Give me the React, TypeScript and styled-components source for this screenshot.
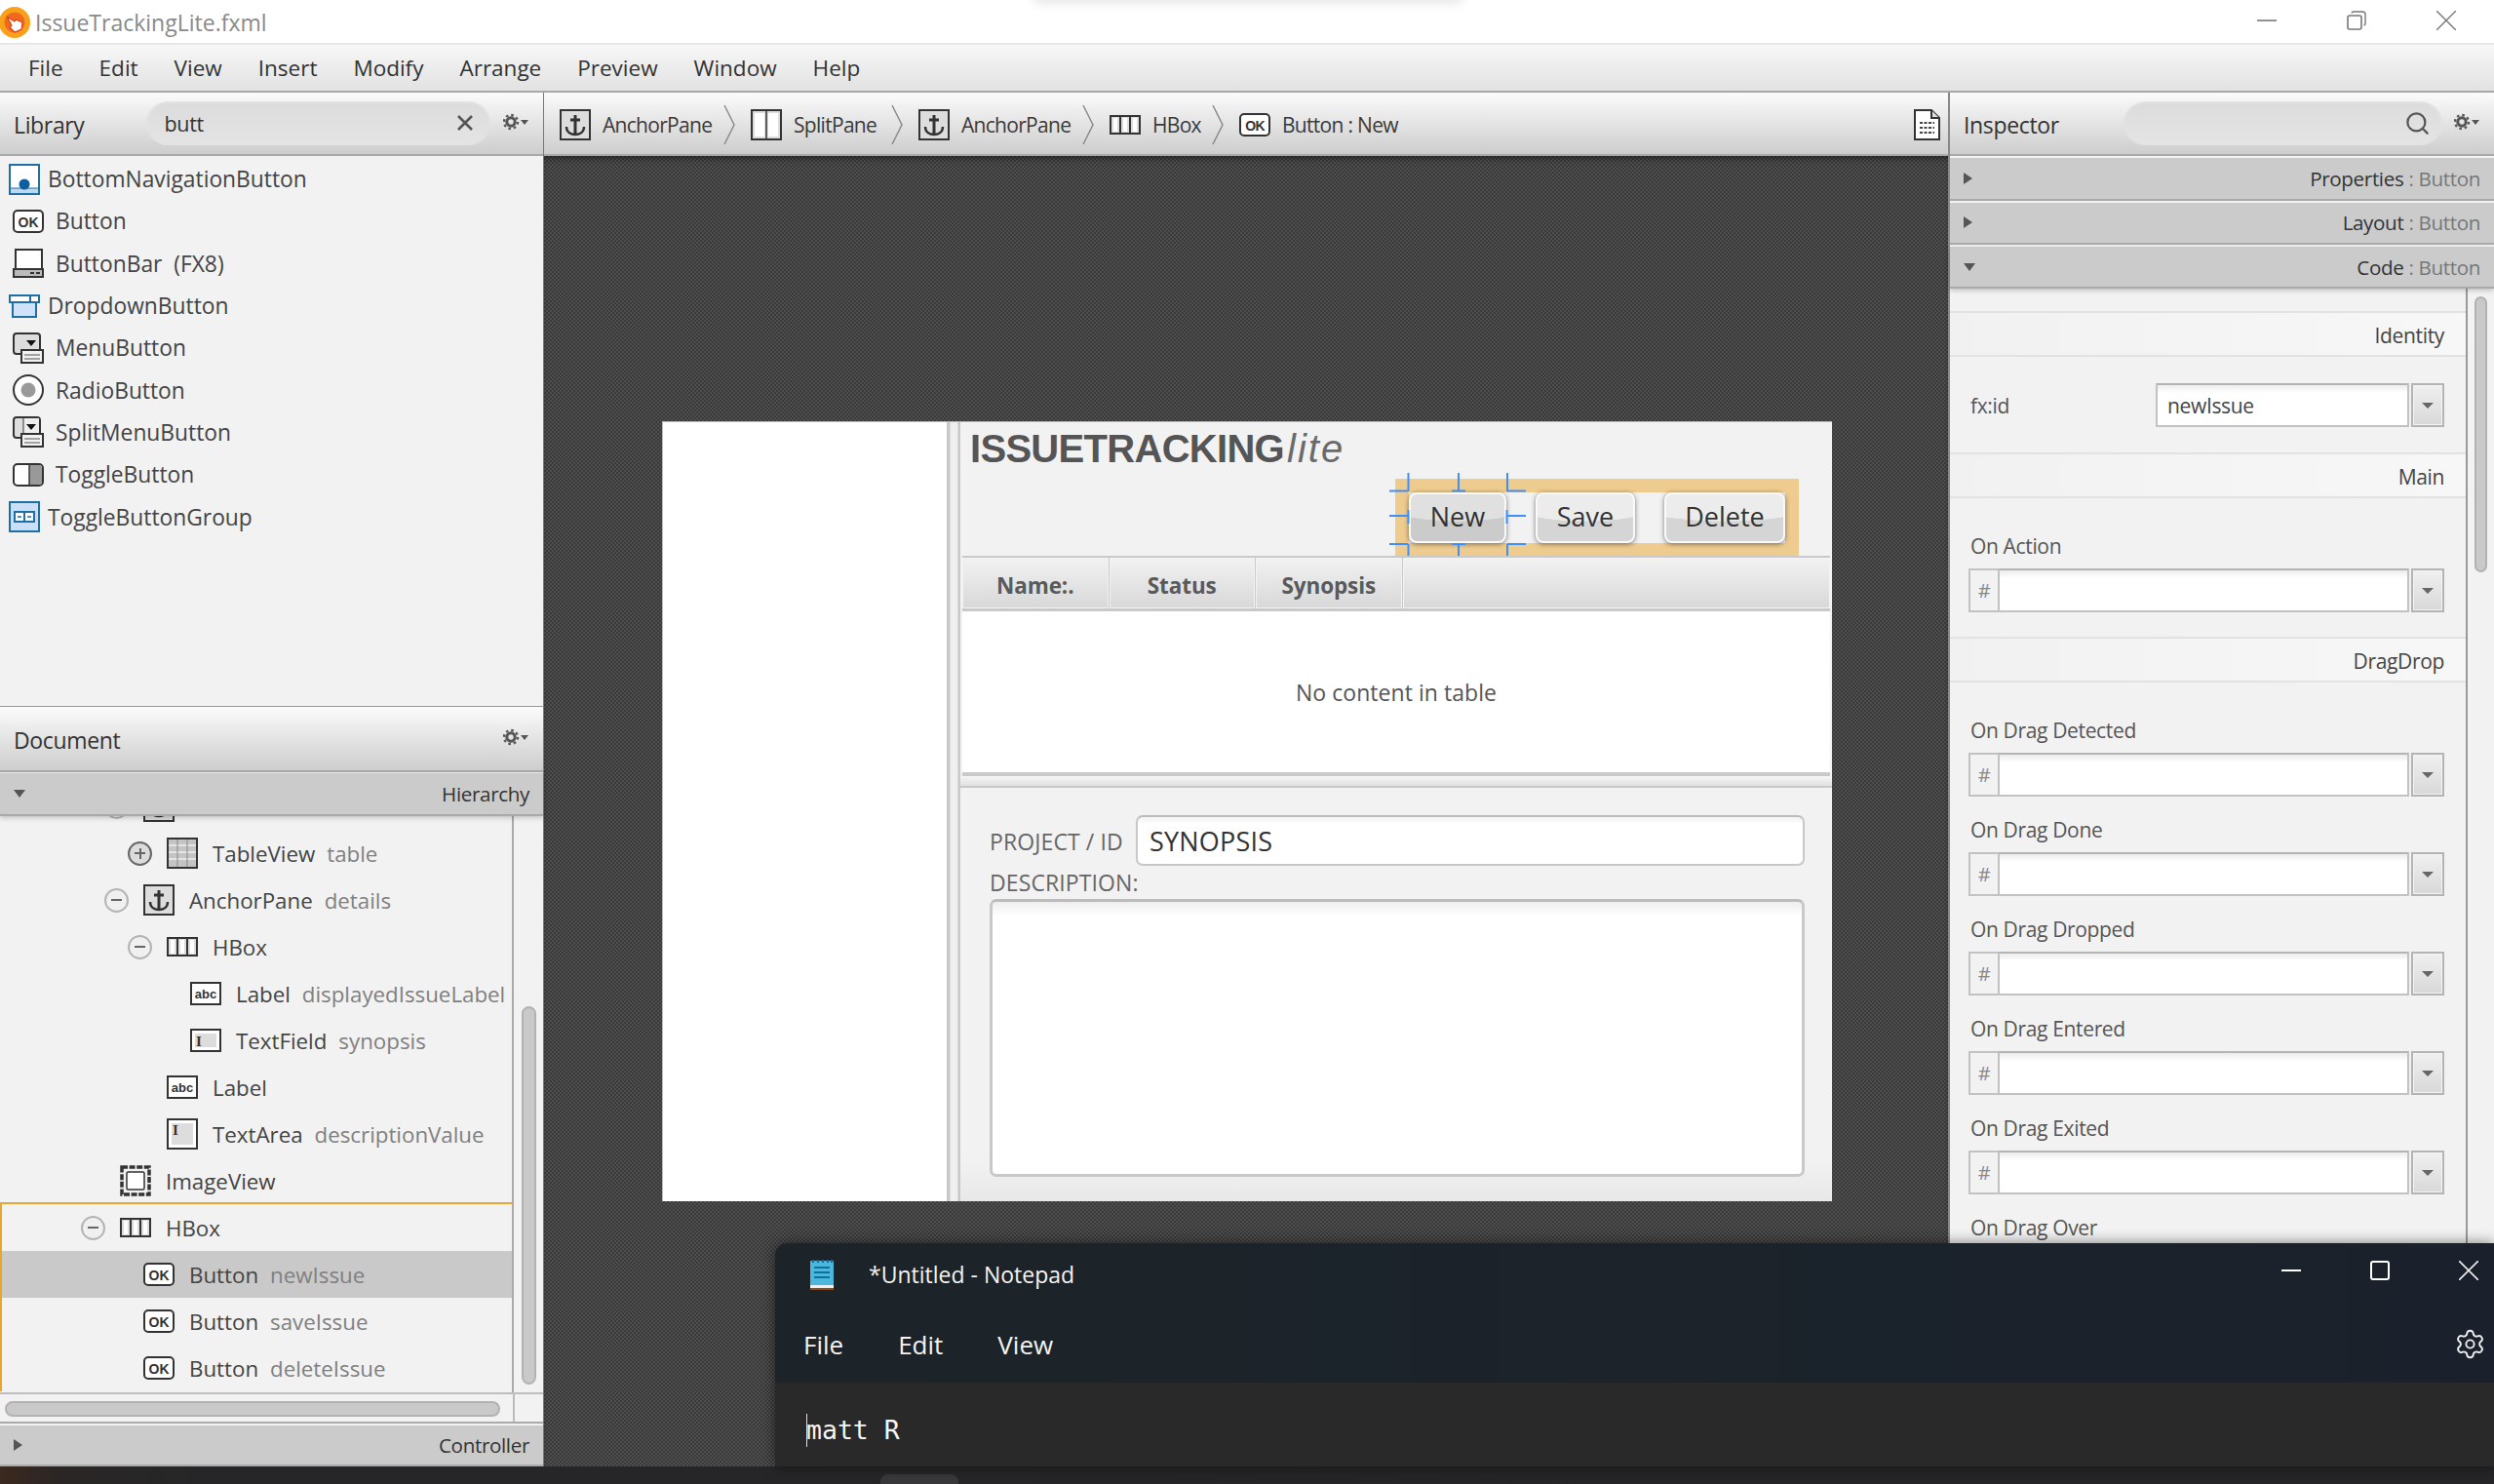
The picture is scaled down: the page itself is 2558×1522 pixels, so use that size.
import React from "react";
import styled, { createGlobalStyle } from "styled-components";
import { Search, Settings } from "lucide-react";

const UI = `"Open Sans", "Noto Sans", sans-serif`;

const Global = createGlobalStyle`
  html, body { margin: 0; padding: 0; background: #252527; }
  * { box-sizing: border-box; }
`;

const Root = styled.div`
  position: relative; width: 2558px; height: 1522px; overflow: hidden;
  display: flex; flex-direction: column;
  font-family: ${UI}; font-size: 22px; letter-spacing: -0.35px; color: #333;
`;

/* ---------- window chrome ---------- */
const TitleBar = styled.div`
  position: relative; height: 46px; flex: none; background: #fff; border-bottom: 2px solid #e8e8e8;
  display: flex; align-items: center; padding-right: 39px;
`;
const TopShade = styled.div`
  position: absolute; left: 1060px; top: -12px; width: 440px; height: 12px;
  box-shadow: 0 2px 12px rgba(0,0,0,.12);
`;
const AppIcon = styled.svg`
  width: 32px; height: 34px; margin-top: 1px; flex: none;
`;
const TitleText = styled.span`
  margin-left: 4px; color: #8a8a8a; font-size: 23px; letter-spacing: 0; flex: 1; padding-top: 1px;
`;
const WinBtns = styled.div`
  display: flex; gap: 72px; align-items: center; margin-top: -3px;
`;
const MenuBar = styled.div`
  height: 49px; flex: none; display: flex; align-items: center; gap: 37px; padding: 0 0 0 29px;
  background: linear-gradient(#f7f7f7, #e2e2e2); border-bottom: 2px solid #a8a8a8;
  font-size: 22.5px; letter-spacing: 0;
`;
const Main = styled.div`
  flex: 1; min-height: 0; display: flex;
`;
const Taskbar = styled.div`
  height: 18px; flex: none; display: flex; align-items: flex-end; padding-left: 903px;
  background: linear-gradient(90deg, #3b2a1f, #2a2625 60px, #262628 200px, #252527);
`;
const TaskTab = styled.div`
  width: 80px; height: 10px; background: #38383a; border-radius: 8px 8px 0 0;
`;

/* ---------- shared panel parts ---------- */
const PanelHeader = styled.div<{ $h?: number }>`
  height: ${p => p.$h ?? 65}px; flex: none; display: flex; align-items: center; padding: 2px 15px 0 14px;
  background: linear-gradient(#fbfbfb, #cdcdcd); border-bottom: 2px solid #a9a9a9;
  position: relative; z-index: 2;
`;
const PanelTitle = styled.span`
  font-size: 23px; color: #333; flex: none;
`;
const SearchBox = styled.div<{ $left: number; $w: number }>`
  margin-left: ${p => p.$left}px; width: ${p => p.$w}px; height: 45px; flex: none; margin-top: -3px;
  display: flex; align-items: center; justify-content: space-between; padding: 0 15px 0 17px;
  border: 2px solid #e2e2e2; border-radius: 23px;
  background: linear-gradient(#dcdcdc, #e4e4e4); font-size: 21.5px;
`;
const SearchGlyph = styled(Search)`
  margin-right: -5px;
`;
const GearWrap = styled.svg`
  width: 26px; height: 18px; flex: none; margin-left: auto; margin-top: -5px;
`;
const GroupBar = styled.div<{ $mt?: number; $h?: number }>`
  height: ${p => p.$h ?? 44}px; margin-top: ${p => p.$mt ?? 1}px; flex: none;
  display: flex; align-items: center; justify-content: space-between; padding: 0 14px 0 14px;
  background: #cbcbcb; border-bottom: 2px solid #a9a9a9; font-size: 20.6px; color: #333;
  position: relative; z-index: 2;
`;
const GroupBarShadow = styled(GroupBar)`
  box-shadow: 0 2px 5px rgba(0,0,0,.2);
`;
const Muted = styled.span`
  color: #777;
`;
const Arrow = styled.span<{ $down?: boolean }>`
  width: 0; height: 0; flex: none;
  ${p => p.$down
    ? `border-left: 6px solid transparent; border-right: 6px solid transparent; border-top: 8px solid #555;`
    : `border-top: 6px solid transparent; border-bottom: 6px solid transparent; border-left: 9px solid #555;`}
`;

/* ---------- left column ---------- */
const LeftCol = styled.div`
  width: 558px; flex: none; display: flex; flex-direction: column; background: #f2f2f2;
  border-right: 1px solid #777;
`;
const LibraryList = styled.div`
  height: 565px; flex: none; padding-top: 2px; border-bottom: 1px solid #999;
`;
const LibRow = styled.div<{ $blue?: boolean }>`
  height: 43.3px; display: flex; align-items: center; font-size: 22.8px; letter-spacing: 0; color: #444;
  padding-left: ${p => (p.$blue ? 9 : 13)}px; gap: ${p => (p.$blue ? 8 : 12)}px;
`;
const IconSlot = styled.span`
  width: 32px; flex: none; display: flex; align-items: center; justify-content: center;
`;
const TreeArea = styled.div`
  height: 591px; flex: none; display: flex; overflow: hidden;
`;
const TreeList = styled.div`
  width: 527px; flex: none; overflow: hidden; border-right: 2px solid #aaa;
`;
const TreeRows = styled.div`
  margin-top: -34px;
`;
const TreeRow = styled.div<{ $x: number; $selected?: boolean }>`
  height: 48px; display: flex; align-items: center; white-space: nowrap;
  padding-left: ${p => p.$x - 40}px; font-size: 22.3px; letter-spacing: 0; color: #444;
  background: ${p => (p.$selected ? "#c9c9c9" : "transparent")};
`;
const ExpanderSlot = styled.span`
  width: 25px; margin-right: 15px; flex: none; display: flex;
`;
const Expander = styled.span<{ $plus?: boolean }>`
  position: relative; width: 25px; height: 25px; border-radius: 50%;
  border: 2px solid ${p => (p.$plus ? "#666" : "#b4b4b4")};
  background: ${p => (p.$plus ? "#dcdcdc" : "#f0f0f0")};
  &::before { content: ""; position: absolute; left: 5px; right: 5px; top: 9.5px; height: 2px; background: #666; }
  ${p => p.$plus && `&::after { content: ""; position: absolute; top: 5px; bottom: 5px; left: 9.5px; width: 2px; background: #666; }`}
`;
const RowName = styled.span`
  margin-left: 15px;
`;
const RowId = styled.span`
  margin-left: 12px; color: #808080;
`;
const SelectedGroup = styled.div`
  margin-top: -2px; border-top: 2px solid #e8a62f; border-left: 2px solid #e8a62f;
`;
const VScrollCol = styled.div`
  flex: 1; padding: 195px 7px 0 8px;
`;
const VThumb = styled.div<{ $h: number }>`
  height: ${p => p.$h}px; border: 2px solid #b2b2b2; background: #c9c9c9; border-radius: 8px;
`;
const HScrollRow = styled.div`
  height: 32px; flex: none; border-top: 2px solid #bdbdbd; padding: 7px 0 0 5px; display: flex;
  border-bottom: 2px solid #aaa; position: relative;
`;
const HThumb = styled.div`
  width: 508px; height: 16px; border: 2px solid #b2b2b2; background: #c9c9c9; border-radius: 8px;
`;
const HScrollEdge = styled.span`
  position: absolute; left: 526px; top: 0; bottom: 0; width: 2px; background: #bbb;
`;

/* ---------- centre ---------- */
const CenterCol = styled.div`
  flex: 1; min-width: 0; display: flex; flex-direction: column;
`;
const Crumbs = styled(PanelHeader)`
  padding: 2px 8px 0 16px; gap: 12px; font-size: 21px; letter-spacing: -0.7px;
`;
const Crumb = styled.span<{ $w: number }>`
  width: ${p => p.$w}px; flex: none; white-space: nowrap; color: #3a3a3a;
`;
const Chevron = styled.svg`
  width: 12px; height: 42px; flex: none; margin-right: 4px;
`;
const DocIcon = styled.svg`
  width: 27px; height: 32px; flex: none; margin-left: auto;
`;
const Canvas = styled.div`
  flex: 1; min-height: 0; padding: 272px 0 0 121px;
  background: repeating-conic-gradient(#393939 0 25%, #4f4f4f 0 50%) 0 0 / 4px 4px;
  box-shadow: inset 0 5px 6px -3px rgba(0,0,0,.5);
`;
const Stage = styled.div`
  width: 1200px; height: 800px; display: flex; background: #f2f2f2;
  border-top: 1px solid #bbb; border-left: 1px solid #bbb;
`;
const WhitePane = styled.div`
  width: 291px; flex: none; background: #fff;
`;
const Divider = styled.div`
  width: 14px; flex: none; background: linear-gradient(90deg, #c8c8c8 3px, #efefef 4px, #efefef 11px, #c8c8c8 12px);
`;
const RightPane = styled.div`
  flex: 1; min-width: 0; display: flex; flex-direction: column;
`;
const TitleArea = styled.div`
  height: 137px; flex: none; display: flex; flex-direction: column;
`;
const Brand = styled.div`
  height: 44px; margin: 5px 0 2px 10px; display: flex; align-items: center; color: #555;
  font-family: "Liberation Sans", Arial, sans-serif; font-size: 40px; line-height: 44px; letter-spacing: -0.7px;
`;
const BrandBold = styled.span`
  font-weight: 700;
`;
const BrandLite = styled.span`
  font-style: italic; font-weight: 400; color: #6a6a6a; margin-left: 3px; letter-spacing: 2px;
`;
const HBoxSel = styled.div`
  align-self: flex-end; margin: 7px 34px 0 0; width: 414px; height: 80px; flex: none;
  border: 14px solid #eecb8f; background: #f2f2f2; display: flex; gap: 30px;
  position: relative; z-index: 1;
`;
const GlossButton = styled.div<{ $w: number; $active?: boolean }>`
  position: relative; width: ${p => p.$w}px; height: 52px; flex: none; padding-bottom: 3px;
  display: flex; align-items: center; justify-content: center; font-size: 27px; letter-spacing: 0; color: #333;
  border: 2px solid #fafafa; border-radius: 8px;
  box-shadow: 0 1px 5px rgba(0,0,0,.5);
  background:
    radial-gradient(ellipse 95% 58% at 50% 0, ${p => (p.$active ? "#e0e0e0" : "#ececec")} 98%, transparent 100%),
    ${p => (p.$active ? "#cbcbcb" : "#d5d5d5")};
`;
const Handles = styled.svg`
  position: absolute; left: -22px; top: -22px; width: 140px; height: 92px; overflow: visible; z-index: 3;
`;
const TableBox = styled.div`
  height: 226px; flex: none; margin: 0 2px; display: flex; flex-direction: column;
  border-top: 2px solid #c9c9c9; border-bottom: 4px solid #c9c9c9;
  position: relative; z-index: 2;
`;
const TableHead = styled.div`
  height: 55px; flex: none; display: flex; gap: 1px; background: #c9c9c9; border-bottom: 3px solid #c9c9c9;
`;
const HeadCell = styled.div<{ $grow?: boolean }>`
  ${p => (p.$grow ? "flex: 1;" : "width: 149.5px; flex: none;")}
  display: flex; align-items: center; justify-content: center; padding-top: 4px;
  font-size: 22.5px; font-weight: 700; letter-spacing: -0.1px; color: #5a5a5a;
  background: linear-gradient(#f2f2f2, #d8d8d8); box-shadow: inset 0 0 0 1px #f3f3f3;
`;
const TableBody = styled.div`
  flex: 1; background: #fff; display: flex; align-items: center; justify-content: center;
  color: #555; font-size: 23px; letter-spacing: 0.05px; padding-top: 1px;
`;
const HSplit = styled.div`
  height: 12px; flex: none; background: linear-gradient(#f6f6f6, #e0e0e0); border-bottom: 2px solid #c9c9c9;
`;
const Details = styled.div`
  flex: 1; min-height: 0; padding: 28px 28px 0 30px; display: flex; flex-direction: column;
  background: linear-gradient(#f2f2f2 90%, #e8e8e8);
`;
const ProjectRow = styled.div`
  display: flex; align-items: center; height: 52px; flex: none;
`;
const FieldLabel = styled.span`
  color: #666; font-size: 23px; letter-spacing: 0.1px; line-height: 28px; flex: none;
`;
const ProjectLabel = styled(FieldLabel)`
  width: 150px; padding-top: 2px;
`;
const SynopsisInput = styled.div`
  flex: 1; height: 52px; display: flex; align-items: center; padding: 0 12px; font-size: 27px; letter-spacing: 0.2px; color: #333;
  background: linear-gradient(#f2f2f2, #fff 7px); border: 2px solid #c8c8c8; border-top-color: #bcbcbc; border-radius: 7px;
`;
const DescLabel = styled(FieldLabel)`
  margin-top: 3px;
`;
const DescArea = styled.div`
  margin-top: 3px; height: 285px; flex: none; background: linear-gradient(#eee, #fff 14px);
  border: 3px solid #c8c8c8; border-top-color: #bcbcbc; border-radius: 7px;
`;

/* ---------- inspector ---------- */
const RightCol = styled.div`
  width: 560px; flex: none; display: flex; flex-direction: column; background: #f2f2f2; border-left: 2px solid #888;
  position: relative;
`;
const InspectorBody = styled.div`
  flex: 1; min-height: 0; display: flex; overflow: hidden;
`;
const InspectorScroll = styled.div`
  width: 531px; flex: none; padding-top: 23px; border-right: 2px solid #999;
`;
const SectionHead = styled.div`
  height: 47px; display: flex; align-items: center; justify-content: flex-end; padding: 2px 22px 0 0;
  background: linear-gradient(90deg, #f1f1f1, #f7f7f7); border-top: 2px solid #e2e2e2; border-bottom: 2px solid #e2e2e2;
  font-size: 21px; color: #444;
`;
const IdRow = styled.div`
  height: 98px; padding: 27px 22px 0 21px; display: flex; align-items: flex-start; justify-content: space-between;
  font-size: 21px; color: #555;
`;
const IdLabel = styled.span`
  line-height: 46px;
`;
const FieldGroup = styled.div<{ $pb?: number }>`
  padding: 35px 22px ${p => p.$pb ?? 0}px 19px; display: flex; flex-direction: column; gap: 20px;
`;
const EventField = styled.div`
  display: flex; flex-direction: column; gap: 9px;
`;
const EventLabel = styled.span`
  height: 28px; line-height: 28px; padding-left: 2px; font-size: 21px; color: #555; white-space: nowrap;
`;
const InputLine = styled.div`
  display: flex; gap: 2px; height: 45px;
`;
const HashBox = styled.span`
  width: 30px; margin-right: -2px; flex: none; display: flex; align-items: center; justify-content: center; color: #888; font-size: 20px;
  background: #f2f2f2; border: 2px solid #c2c2c2; border-right: none;
`;
const WhiteInput = styled.div<{ $w?: number }>`
  ${p => (p.$w ? `width: ${p.$w}px; flex: none;` : "flex: 1;")}
  display: flex; align-items: center; padding-left: 10px; color: #444;
  background: linear-gradient(#ececec, #fff 8px); border: 2px solid #c2c2c2; border-top-color: #b4b4b4;
`;
const DropBtn = styled.span`
  width: 34px; flex: none; display: flex; align-items: center; justify-content: center;
  border: 2px solid #b4b4b4; background: linear-gradient(#f0f0f0, #d8d8d8); box-shadow: inset 0 0 0 1px #f4f4f4;
`;
const Caret = styled.span`
  width: 0; height: 0; border-left: 6px solid transparent; border-right: 6px solid transparent; border-top: 6px solid #666;
`;
const InspectorThumbCol = styled.div`
  flex: 1; padding: 8px 7px 0 7px;
`;
const BottomFade = styled.div`
  position: absolute; left: 0; right: 0; bottom: 0; height: 45px; pointer-events: none;
  background: linear-gradient(rgba(180,180,180,0), rgba(170,170,170,.85));
`;

/* ---------- notepad ---------- */
const Notepad = styled.div`
  position: absolute; left: 795px; top: 1275px; right: 0; height: 229px; z-index: 5;
  display: flex; flex-direction: column; overflow: hidden; border-radius: 12px 0 0 0;
  background: linear-gradient(90deg, #1c2429, #1a212c); box-shadow: 0 0 14px rgba(0,0,0,.5);
  color: #f3f3f3;
`;
const NoteTitle = styled.div`
  height: 64px; flex: none; display: flex; align-items: center; padding: 0 16px 0 36px; font-size: 23px; letter-spacing: 0;
`;
const NoteName = styled.span`
  margin-left: 36px; flex: 1;
`;
const NoteCtrls = styled.div`
  display: flex; align-items: center; gap: 71px; margin-bottom: 8px;
`;
const NoteMenu = styled.div`
  height: 79px; flex: none; display: flex; align-items: center; padding: 0 8px 0 29px; gap: 56px; font-size: 26px; letter-spacing: 0;
`;
const NoteSpacer = styled.span`
  flex: 1;
`;
const NoteBody = styled.div`
  flex: 1; background: #292929; padding: 32px 0 0 32px; display: flex; align-items: flex-start;
  font-family: "DejaVu Sans Mono", "Liberation Mono", monospace; font-size: 26.5px; letter-spacing: 0; line-height: 34px; color: #f5f5f5;
`;
const CaretLine = styled.span`
  width: 1px; height: 34px; background: #ddd; margin-right: -1px; flex: none;
`;

/* ---------- drawings ---------- */
type IconKind = "ok" | "bottomNav" | "buttonBar" | "dropdown" | "menu" | "radio" | "splitMenu" | "toggle" | "toggleGroup"
  | "table" | "anchor" | "split" | "hbox" | "abc" | "field" | "area" | "image";

const IconSvg = styled.svg`
  display: block; flex: none; overflow: visible;
`;

const ICON_H: Record<IconKind, number> = {
  ok: 24, bottomNav: 32, buttonBar: 30, dropdown: 24, menu: 32, radio: 32, splitMenu: 32, toggle: 24, toggleGroup: 32,
  table: 32, anchor: 32, split: 32, hbox: 20, abc: 24, field: 24, area: 32, image: 32,
};

const Body: React.FC<{ kind: IconKind }> = ({ kind }) => {
  const ink = "#333";
  const blue = "#1f6ea6";
  switch (kind) {
    case "ok":
      return <>
        <rect x="1" y="1" width="30" height="22" rx="4" fill="#fff" stroke={ink} strokeWidth="2" />
        <text x="16" y="17.5" textAnchor="middle" fontFamily="Liberation Sans" fontWeight="700" fontSize="14" fill={ink}>OK</text>
      </>;
    case "bottomNav":
      return <>
        <rect x="1" y="1" width="30" height="30" fill="#fff" stroke={blue} strokeWidth="2" />
        <rect x="2" y="25" width="28" height="5" fill="#bcd9f2" />
        <line x1="2" y1="25" x2="30" y2="25" stroke={blue} />
        <circle cx="16" cy="21" r="5.5" fill="#0f5f9e" />
      </>;
    case "buttonBar":
      return <>
        <rect x="3" y="1" width="27" height="21" fill="#fff" stroke={ink} strokeWidth="2" />
        <rect x="1" y="21" width="30" height="8" fill="#bbb" stroke={ink} strokeWidth="2" />
        <path d="M18 25h4M24 25h4" stroke={ink} strokeWidth="2" />
      </>;
    case "dropdown":
      return <>
        <rect x="4" y="8" width="24" height="15" fill="#cfe2f7" stroke={blue} strokeWidth="2" />
        <path d="M1 8V1h30v7z" fill="#fff" stroke={blue} strokeWidth="2" />
        <path d="M22 1v7" stroke={blue} strokeWidth="2" />
      </>;
    case "menu":
    case "splitMenu":
      return <>
        <rect x="1" y="1" width="27" height="21" rx="3" fill="#ddd" stroke={ink} strokeWidth="2" />
        {kind === "splitMenu" && <rect x="11" y="2" width="16" height="19" fill="#eee" />}
        {kind === "splitMenu" && <path d="M11 2v19" stroke={ink} strokeWidth="1" />}
        <path d="M14 8h10l-5 6z" fill="#111" />
        <rect x="9" y="18" width="22" height="13" fill="#f2f2f2" stroke={ink} strokeWidth="2" />
        <path d="M12 23h16M12 27h16" stroke="#888" strokeWidth="1.5" />
      </>;
    case "radio":
      return <>
        <circle cx="16" cy="16" r="15" fill="#fff" stroke={ink} strokeWidth="2" />
        <circle cx="16" cy="16" r="7.5" fill="#999" />
      </>;
    case "toggle":
      return <>
        <rect x="1" y="1" width="30" height="22" rx="4" fill="#fff" stroke={ink} strokeWidth="2" />
        <path d="M17 2h10a3 3 0 0 1 3 3v14a3 3 0 0 1-3 3H17z" fill="#999" />
        <path d="M17 2v20" stroke={ink} strokeWidth="1.5" />
      </>;
    case "toggleGroup":
      return <>
        <rect x="1" y="1" width="30" height="30" fill="#c8dff5" stroke={blue} strokeWidth="2" />
        <rect x="6" y="11" width="20" height="10" fill="#fff" stroke={blue} strokeWidth="2" />
        <path d="M16 11v10" stroke={blue} strokeWidth="2" />
        <path d="M9 16h4M19 16h4" stroke={blue} strokeWidth="1.5" />
      </>;
    case "table":
      return <>
        <rect x="1" y="1" width="30" height="30" fill="#c4c4c4" stroke={ink} strokeWidth="2" />
        <path d="M2 8h28M2 15h28M2 22h28" stroke="#eee" strokeWidth="1.5" />
        <path d="M11 2v28M21 2v28" stroke="#888" strokeWidth="1" />
      </>;
    case "anchor":
      return <>
        <rect x="1" y="1" width="30" height="30" fill="#ddd" stroke={ink} strokeWidth="2" />
        <path d="M16 6v19M11 11h10" stroke={ink} strokeWidth="3" fill="none" />
        <path d="M7 18c0 6 5 8 9 8s9-2 9-8" stroke={ink} strokeWidth="2.5" fill="none" />
      </>;
    case "split":
      return <>
        <rect x="1" y="1" width="30" height="30" fill="#ddd" stroke={ink} strokeWidth="2" />
        <rect x="4" y="4" width="10" height="24" fill="#fff" />
        <rect x="18" y="4" width="10" height="24" fill="#fff" />
        <path d="M16 2v28" stroke={ink} strokeWidth="1.5" />
      </>;
    case "hbox":
      return <>
        <rect x="1" y="1" width="30" height="18" fill="#ddd" stroke={ink} strokeWidth="2" />
        <path d="M11 2v16M21 2v16" stroke={ink} strokeWidth="2" />
        <path d="M6 3v14M16 3v14M26 3v14" stroke="#fff" strokeWidth="4" />
      </>;
    case "abc":
      return <>
        <rect x="1" y="1" width="30" height="22" fill="#fff" stroke={ink} strokeWidth="2" />
        <text x="16" y="17" textAnchor="middle" fontFamily="Liberation Sans" fontWeight="700" fontSize="13" fill={ink}>abc</text>
      </>;
    case "field":
      return <>
        <rect x="1" y="1" width="30" height="22" fill="#fff" stroke={ink} strokeWidth="2" />
        <rect x="5" y="5" width="22" height="14" fill="#ddd" />
        <text x="9" y="18" textAnchor="middle" fontFamily="Liberation Serif" fontWeight="700" fontSize="15" fill={ink}>I</text>
      </>;
    case "area":
      return <>
        <rect x="1" y="1" width="30" height="30" fill="#fff" stroke={ink} strokeWidth="2" />
        <rect x="5" y="5" width="22" height="22" fill="#ddd" />
        <text x="9" y="17" textAnchor="middle" fontFamily="Liberation Serif" fontWeight="700" fontSize="15" fill={ink}>I</text>
      </>;
    case "image":
      return <>
        <rect x="2" y="2" width="28" height="28" fill="none" stroke={ink} strokeWidth="3.5" strokeDasharray="6 1.6" />
        <rect x="7" y="7" width="18" height="18" rx="1.5" fill="#fff" stroke={ink} strokeWidth="1.5" />
      </>;
  }
};

const Icon: React.FC<{ kind: IconKind }> = ({ kind }) => {
  const h = ICON_H[kind];
  return (
    <IconSvg width={32} height={h} viewBox={`0 0 32 ${h}`}>
      <Body kind={kind} />
    </IconSvg>
  );
};

const Gear: React.FC = () => (
  <GearWrap viewBox="0 0 26 18">
    <circle cx="8" cy="9" r="4.2" fill="none" stroke="#555" strokeWidth="3" />
    <circle cx="8" cy="9" r="7" fill="none" stroke="#555" strokeWidth="2.4" strokeDasharray="2.6 2.9" />
    <path d="M18 7h8l-4 5z" fill="#555" />
  </GearWrap>
);

const ChevronMark: React.FC = () => (
  <Chevron viewBox="0 0 12 42">
    <path d="M1 1l10 20L1 41" fill="none" stroke="#8a8a8a" strokeWidth="1.5" />
  </Chevron>
);

/* ---------- data ---------- */
const MENUS = ["File", "Edit", "View", "Insert", "Modify", "Arrange", "Preview", "Window", "Help"];
const LIB: { kind: IconKind; label: string; blue?: boolean }[] = [
  { kind: "bottomNav", label: "BottomNavigationButton", blue: true },
  { kind: "ok", label: "Button" },
  { kind: "buttonBar", label: "ButtonBar\u00a0\u00a0(FX8)" },
  { kind: "dropdown", label: "DropdownButton", blue: true },
  { kind: "menu", label: "MenuButton" },
  { kind: "radio", label: "RadioButton" },
  { kind: "splitMenu", label: "SplitMenuButton" },
  { kind: "toggle", label: "ToggleButton" },
  { kind: "toggleGroup", label: "ToggleButtonGroup", blue: true },
];
type Tree = { x: number; kind: IconKind; name?: string; id?: string; exp?: "plus" | "minus"; selected?: boolean };
const TREE_TOP: Tree[] = [
  { x: 147, kind: "anchor", exp: "minus" },
  { x: 171, kind: "table", name: "TableView", id: "table", exp: "plus" },
  { x: 147, kind: "anchor", name: "AnchorPane", id: "details", exp: "minus" },
  { x: 171, kind: "hbox", name: "HBox", exp: "minus" },
  { x: 195, kind: "abc", name: "Label", id: "displayedIssueLabel" },
  { x: 195, kind: "field", name: "TextField", id: "synopsis" },
  { x: 171, kind: "abc", name: "Label" },
  { x: 171, kind: "area", name: "TextArea", id: "descriptionValue" },
  { x: 123, kind: "image", name: "ImageView" },
];
const TREE_GROUP: Tree[] = [
  { x: 121, kind: "hbox", name: "HBox", exp: "minus" },
  { x: 145, kind: "ok", name: "Button", id: "newIssue", selected: true },
  { x: 145, kind: "ok", name: "Button", id: "saveIssue" },
  { x: 145, kind: "ok", name: "Button", id: "deleteIssue" },
];
const CRUMBS: { kind: IconKind; label: string; w: number }[] = [
  { kind: "anchor", label: "AnchorPane", w: 112 },
  { kind: "split", label: "SplitPane", w: 88 },
  { kind: "anchor", label: "AnchorPane", w: 112 },
  { kind: "hbox", label: "HBox", w: 49 },
  { kind: "ok", label: "Button : New", w: 120 },
];
const EVENTS = ["On Drag Detected", "On Drag Done", "On Drag Dropped", "On Drag Entered", "On Drag Exited"];

const TreeItem: React.FC<{ t: Tree }> = ({ t }) => (
  <TreeRow $x={t.x} $selected={t.selected}>
    <ExpanderSlot>{t.exp && <Expander $plus={t.exp === "plus"} />}</ExpanderSlot>
    <IconSlot><Icon kind={t.kind} /></IconSlot>
    {t.name && <RowName>{t.name}</RowName>}
    {t.id && <RowId>{t.id}</RowId>}
  </TreeRow>
);

const EventInput: React.FC<{ label: string }> = ({ label }) => (
  <EventField>
    <EventLabel>{label}</EventLabel>
    <InputLine>
      <HashBox>#</HashBox>
      <WhiteInput />
      <DropBtn><Caret /></DropBtn>
    </InputLine>
  </EventField>
);

export default function App() {
  return (
    <Root>
      <Global />
      <TitleBar>
        <TopShade />
        <AppIcon viewBox="0 0 32 34">
          <circle cx="15" cy="17" r="16" fill="#f9a11b" />
          <circle cx="15" cy="17" r="10.5" fill="#f1691f" />
          <path d="M7 11l8 5 1-2 7 3-1 7-7 3-5-5 2-2-5-9z" fill="#fff" stroke="#d8431a" strokeWidth="1.2" strokeLinejoin="round" />
        </AppIcon>
        <TitleText>IssueTrackingLite.fxml</TitleText>
        <WinBtns>
          <svg width="20" height="20" viewBox="0 0 20 20"><path d="M0 10h20" stroke="#777" strokeWidth="1.6" /></svg>
          <svg width="20" height="20" viewBox="0 0 20 20">
            <rect x="1" y="5" width="14" height="14" rx="2" fill="none" stroke="#777" strokeWidth="1.6" />
            <path d="M5 2.5a2 2 0 0 1 1.5-1.5H16a3 3 0 0 1 3 3v9.5a2 2 0 0 1-1.5 1.5" fill="none" stroke="#777" strokeWidth="1.4" />
          </svg>
          <svg width="20" height="20" viewBox="0 0 20 20"><path d="M0 0l20 20M20 0L0 20" stroke="#777" strokeWidth="1.4" /></svg>
        </WinBtns>
      </TitleBar>
      <MenuBar>
        {MENUS.map(m => <span key={m}>{m}</span>)}
      </MenuBar>
      <Main>
        <LeftCol>
          <PanelHeader>
            <PanelTitle>Library</PanelTitle>
            <SearchBox $left={63} $w={353}>
              <span>butt</span>
              <svg width="18" height="18" viewBox="0 0 18 18"><path d="M2 2l14 14M16 2L2 16" stroke="#555" strokeWidth="2.6" /></svg>
            </SearchBox>
            <Gear />
          </PanelHeader>
          <LibraryList>
            {LIB.map(l => (
              <LibRow key={l.label} $blue={l.blue}>
                <IconSlot><Icon kind={l.kind} /></IconSlot>
                <span>{l.label}</span>
              </LibRow>
            ))}
          </LibraryList>
          <PanelHeader $h={67}>
            <PanelTitle>Document</PanelTitle>
            <Gear />
          </PanelHeader>
          <GroupBarShadow>
            <Arrow $down />
            <span>Hierarchy</span>
          </GroupBarShadow>
          <TreeArea>
            <TreeList>
              <TreeRows>
                {TREE_TOP.map((t, i) => <TreeItem key={i} t={t} />)}
                <SelectedGroup>
                  {TREE_GROUP.map((t, i) => <TreeItem key={i} t={t} />)}
                </SelectedGroup>
              </TreeRows>
            </TreeList>
            <VScrollCol><VThumb $h={388} /></VScrollCol>
          </TreeArea>
          <HScrollRow>
            <HThumb />
            <HScrollEdge />
          </HScrollRow>
          <GroupBar $h={42} $mt={2}>
            <Arrow />
            <span>Controller</span>
          </GroupBar>
        </LeftCol>

        <CenterCol>
          <Crumbs>
            {CRUMBS.map((c, i) => (
              <React.Fragment key={i}>
                <IconSlot><Icon kind={c.kind} /></IconSlot>
                <Crumb $w={c.w}>{c.label}</Crumb>
                {i < CRUMBS.length - 1 && <ChevronMark />}
              </React.Fragment>
            ))}
            <DocIcon viewBox="0 0 27 32">
              <path d="M1 1h17l8 8v22H1z" fill="#fff" stroke="#333" strokeWidth="2" />
              <path d="M18 1v8h8" fill="#ddd" stroke="#333" strokeWidth="2" />
              <path d="M6 14h15M6 19h15M6 24h15" stroke="#444" strokeWidth="2" strokeDasharray="3 1.5" />
            </DocIcon>
          </Crumbs>
          <Canvas>
            <Stage>
              <WhitePane />
              <Divider />
              <RightPane>
                <TitleArea>
                  <Brand>
                    <BrandBold>ISSUETRACKING</BrandBold>
                    <BrandLite>lite</BrandLite>
                  </Brand>
                  <HBoxSel>
                    <GlossButton $w={100} $active>
                      New
                      <Handles viewBox="0 0 140 92">
                        <path
                          d="M0 18.5H19M19.5 0V19M71 0V18M64 18.5H78M121 0V19M121 18.5H140M0 44H20M19.5 38V52M120.5 38V52M121 44H140M0 73H19M19.5 73V92M64 73H78M71 73V92M121 73H140M121 73V92"
                          fill="none" stroke="#3f8ffb" strokeWidth="2"
                        />
                      </Handles>
                    </GlossButton>
                    <GlossButton $w={102}>Save</GlossButton>
                    <GlossButton $w={124}>Delete</GlossButton>
                  </HBoxSel>
                </TitleArea>
                <TableBox>
                  <TableHead>
                    <HeadCell>Name:.</HeadCell>
                    <HeadCell>Status</HeadCell>
                    <HeadCell>Synopsis</HeadCell>
                    <HeadCell $grow />
                  </TableHead>
                  <TableBody>No content in table</TableBody>
                </TableBox>
                <HSplit />
                <Details>
                  <ProjectRow>
                    <ProjectLabel>PROJECT / ID</ProjectLabel>
                    <SynopsisInput>SYNOPSIS</SynopsisInput>
                  </ProjectRow>
                  <DescLabel>DESCRIPTION:</DescLabel>
                  <DescArea />
                </Details>
              </RightPane>
            </Stage>
          </Canvas>
        </CenterCol>

        <RightCol>
          <PanelHeader>
            <PanelTitle>Inspector</PanelTitle>
            <SearchBox $left={66} $w={327}>
              <span />
              <SearchGlyph size={27} color="#555" strokeWidth={2} />
            </SearchBox>
            <Gear />
          </PanelHeader>
          <GroupBar $h={43.5} $mt={2}><Arrow /><span>Properties <Muted>: Button</Muted></span></GroupBar>
          <GroupBar $h={43.5} $mt={2}><Arrow /><span>Layout <Muted>: Button</Muted></span></GroupBar>
          <GroupBarShadow $h={43} $mt={2}><Arrow $down /><span>Code <Muted>: Button</Muted></span></GroupBarShadow>
          <InspectorBody>
            <InspectorScroll>
              <SectionHead>Identity</SectionHead>
              <IdRow>
                <IdLabel>fx:id</IdLabel>
                <InputLine>
                  <WhiteInput $w={260}>newIssue</WhiteInput>
                  <DropBtn><Caret /></DropBtn>
                </InputLine>
              </IdRow>
              <SectionHead>Main</SectionHead>
              <FieldGroup $pb={25}>
                <EventInput label="On Action" />
              </FieldGroup>
              <SectionHead>DragDrop</SectionHead>
              <FieldGroup>
                {EVENTS.map(e => <EventInput key={e} label={e} />)}
                <EventLabel>On Drag Over</EventLabel>
              </FieldGroup>
            </InspectorScroll>
            <InspectorThumbCol><VThumb $h={283} /></InspectorThumbCol>
          </InspectorBody>
          <BottomFade />
        </RightCol>
      </Main>
      <Taskbar><TaskTab /></Taskbar>

      <Notepad>
        <NoteTitle>
          <svg width="24" height="32" viewBox="0 0 24 32">
            <rect x="0" y="2" width="24" height="28" rx="1" fill="#4cb7dd" />
            <rect x="0" y="27" width="24" height="3" fill="#eee" />
            <rect x="0" y="30" width="24" height="2" fill="#8c4a18" />
            <path d="M4 9h16M4 14h16M4 19h16" stroke="#0d6f9e" strokeWidth="2" />
            <path d="M3 1v3M8 1v3M13 1v3M18 1v3M22 1v3" stroke="#0d6f9e" strokeWidth="2" />
          </svg>
          <NoteName>*Untitled - Notepad</NoteName>
          <NoteCtrls>
            <svg width="20" height="20" viewBox="0 0 20 20"><path d="M0 10h20" stroke="#fff" strokeWidth="2" /></svg>
            <svg width="20" height="20" viewBox="0 0 20 20"><rect x="1" y="1" width="18" height="18" rx="2" fill="none" stroke="#fff" strokeWidth="2" /></svg>
            <svg width="20" height="20" viewBox="0 0 20 20"><path d="M0 0l20 20M20 0L0 20" stroke="#eee" strokeWidth="1.6" /></svg>
          </NoteCtrls>
        </NoteTitle>
        <NoteMenu>
          <span>File</span>
          <span>Edit</span>
          <span>View</span>
          <NoteSpacer />
          <Settings size={33} color="#eee" strokeWidth={1.4} />
        </NoteMenu>
        <NoteBody>
          <CaretLine />
          <span>matt&nbsp;R</span>
        </NoteBody>
      </Notepad>
    </Root>
  );
}
